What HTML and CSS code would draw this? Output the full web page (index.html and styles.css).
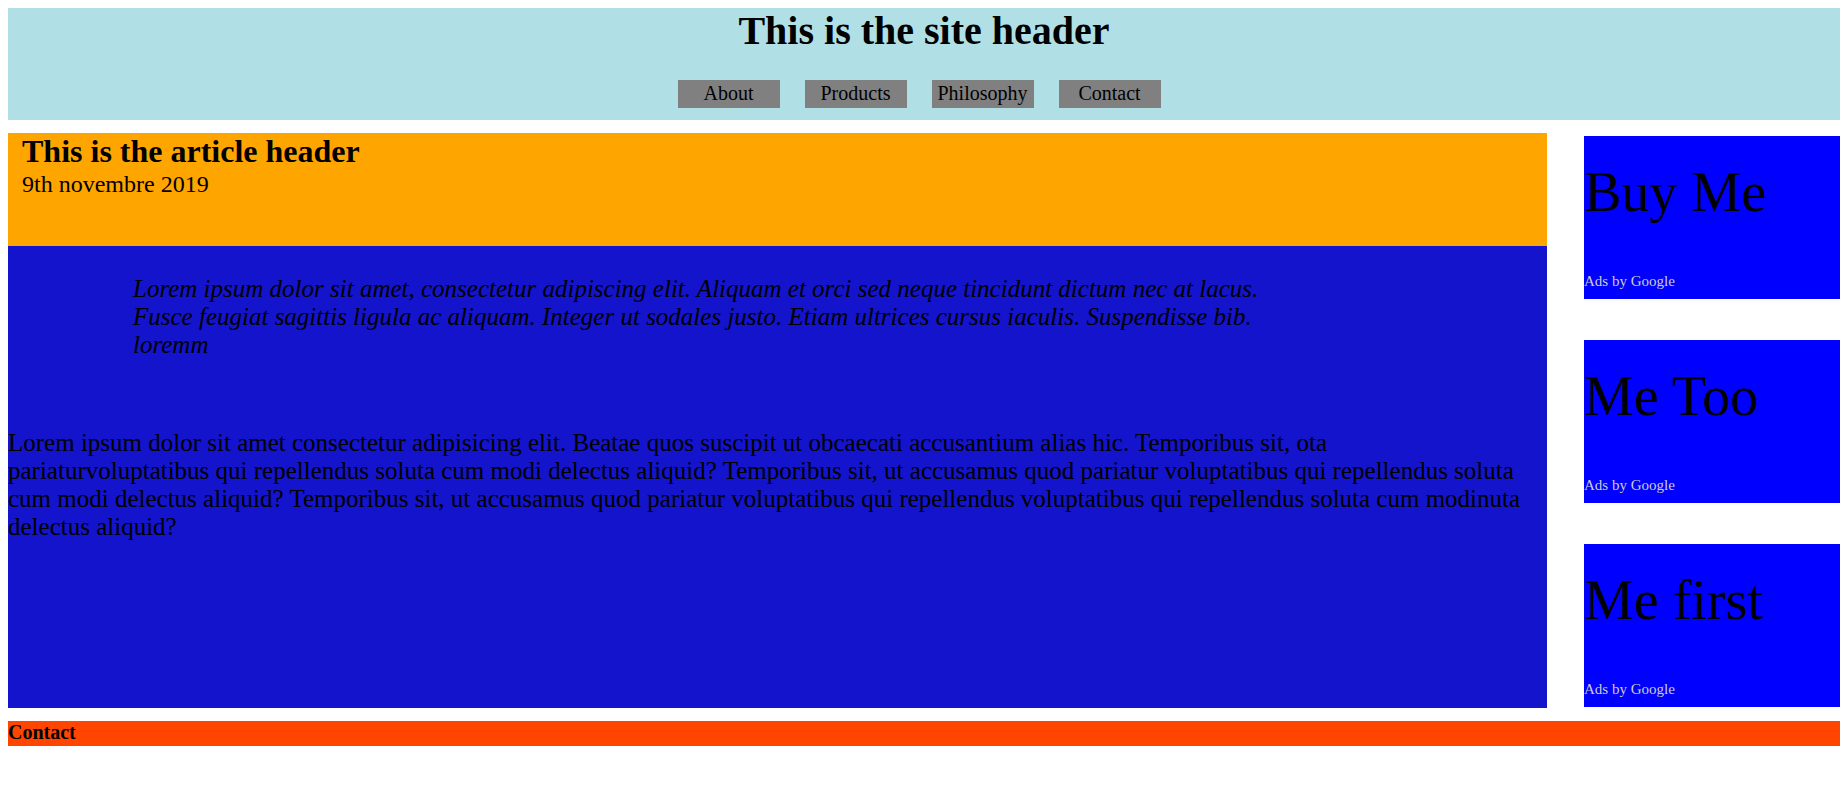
FILE: index.html
```html
<!DOCTYPE html>
<html lang="en">
<head>
<meta charset="utf-8">
<title>Layout</title>
<link rel="stylesheet" href="styles.css">
</head>
<body>
<div class="page">
  <header class="site-header">
    <h1 class="site-title">This is the site header</h1>
    <nav class="nav">
      <a class="nav-item" href="#">About</a>
      <a class="nav-item" href="#">Products</a>
      <a class="nav-item" href="#">Philosophy</a>
      <a class="nav-item" href="#">Contact</a>
    </nav>
  </header>
  <main class="main">
    <article class="article">
      <header class="article-header">
        <h2 class="article-title">This is the article header</h2>
        <div class="article-date">9th novembre 2019</div>
      </header>
      <div class="article-body">
        <blockquote class="quote">Lorem ipsum dolor sit amet, consectetur adipiscing elit. Aliquam et orci sed neque tincidunt dictum nec at lacus. Fusce feugiat sagittis ligula ac aliquam. Integer ut sodales justo. Etiam ultrices cursus iaculis. Suspendisse bib. loremm</blockquote>
        <p class="text">Lorem ipsum dolor sit amet consectetur adipisicing elit. Beatae quos suscipit ut obcaecati accusantium alias hic. Temporibus sit, ota pariaturvoluptatibus qui repellendus soluta cum modi delectus aliquid? Temporibus sit, ut accusamus quod pariatur voluptatibus qui repellendus soluta cum modi delectus aliquid? Temporibus sit, ut accusamus quod pariatur voluptatibus qui repellendus voluptatibus qui repellendus soluta cum modinuta delectus aliquid?</p>
      </div>
    </article>
    <aside class="sidebar">
      <div class="ad"><div class="ad-title">Buy Me</div><div class="ad-note">Ads by Google</div></div>
      <div class="ad"><div class="ad-title">Me Too</div><div class="ad-note">Ads by Google</div></div>
      <div class="ad"><div class="ad-title">Me first</div><div class="ad-note">Ads by Google</div></div>
    </aside>
  </main>
  <footer class="site-footer">Contact</footer>
</div>
</body>
</html>
```

FILE: styles.css
```css
html, body {
  margin: 0;
  padding: 0;
}
body {
  margin: 8px;
  font-family: "Liberation Serif", "Times New Roman", serif;
  color: #000;
  background: #fff;
}
.page {
  display: flex;
  flex-direction: column;
  gap: 13px;
}
.site-header {
  background: #b0e0e6;
  height: 112px;
  display: flex;
  flex-direction: column;
  align-items: center;
}
.site-title {
  margin: 0;
  font-size: 40px;
  font-weight: bold;
  line-height: 46px;
}
.nav {
  margin-top: 26px;
  display: flex;
  gap: 25px;
  margin-right: 10px;
}
.nav-item {
  display: block;
  width: 102px;
  height: 28px;
  line-height: 27px;
  background: #808080;
  color: #000;
  text-decoration: none;
  text-align: center;
  font-size: 20px;
}
.main {
  display: grid;
  grid-template-columns: 1539px 256px;
  column-gap: 37px;
  height: 575px;
}
.article {
  display: flex;
  flex-direction: column;
}
.article-header {
  background: #ffa500;
  height: 113px;
  padding: 0 14px;
}
.article-title {
  margin: 0;
  font-size: 32px;
  font-weight: bold;
  line-height: 37px;
}
.article-date {
  font-size: 24px;
  line-height: 28px;
}
.article-body {
  flex: 1;
  background: #1414cc;
  font-size: 25px;
  line-height: 28px;
}
.quote {
  margin: 29px 0 0 125px;
  width: 1150px;
  font-style: italic;
}
.text {
  margin: 70px 14px 0 0;
}
.sidebar {
  display: flex;
  flex-direction: column;
  justify-content: space-between;
  padding: 3px 0 1px;
}
.ad {
  background: #0000ff;
  height: 163px;
  box-sizing: border-box;
  padding: 24px 0 9px;
  display: flex;
  flex-direction: column;
}
.ad-title {
  font-size: 56px;
  line-height: 64px;
}
.ad-note {
  margin-top: auto;
  font-size: 15px;
  line-height: 17px;
  color: #cccccc;
}
.site-footer {
  background: #ff4500;
  height: 25px;
  font-size: 20px;
  font-weight: bold;
  line-height: 22px;
}
```
